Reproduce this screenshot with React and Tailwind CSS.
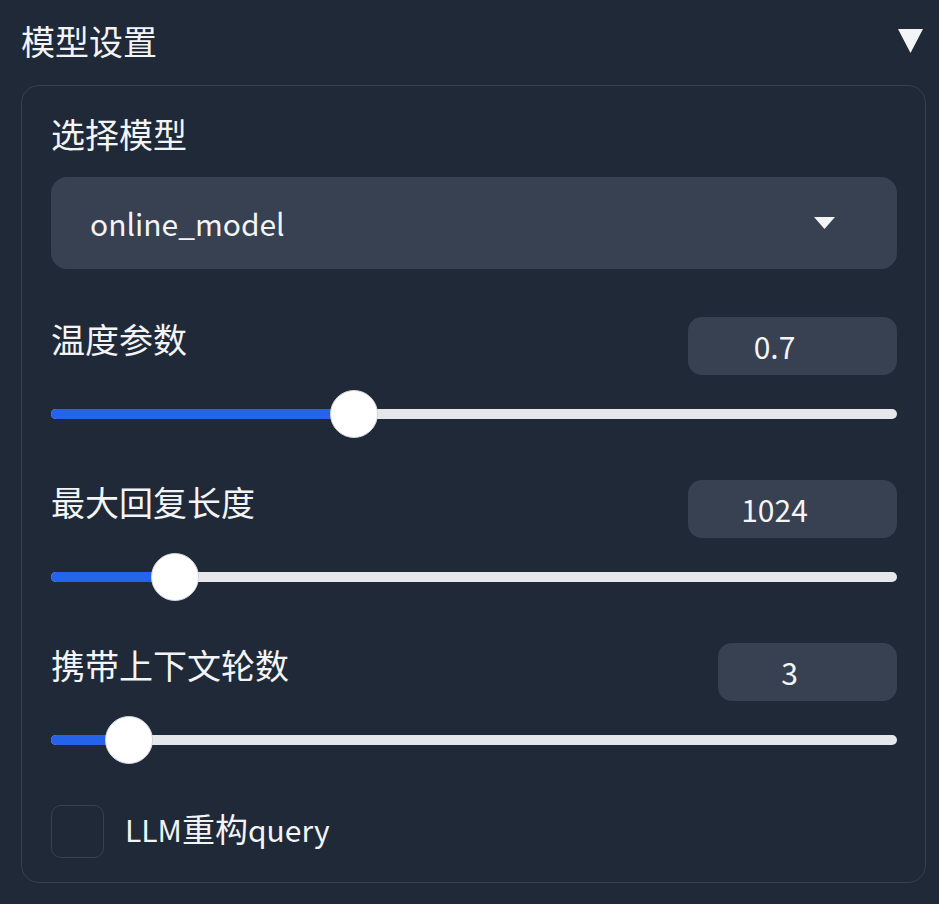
import React from "react";

const font = { fontFamily: '"Noto Sans CJK SC", "Noto Sans", sans-serif' };

function Slider({ center }) {
  return (
    <div className="relative mt-[15px] h-[48px] w-full">
      <div className="absolute left-0 right-0 top-[19px] h-[10px] rounded-full bg-[#e5e7eb]" />
      <div
        className="absolute left-0 top-[19px] h-[10px] rounded-full bg-[#2563eb]"
        style={{ width: center }}
      />
      <div
        className="absolute top-0 h-[48px] w-[48px] rounded-full border border-[#d1d5db] bg-white"
        style={{ left: center - 24 }}
      />
    </div>
  );
}

function SliderRow({ label, value, boxW, center, first }) {
  return (
    <div className={first ? "mt-[48px]" : "mt-[42px]"}>
      <div className="flex items-start justify-between">
        <div className="mt-[2px] h-[40px] text-[34px] leading-[40px] text-[#f3f4f6]">{label}</div>
        <div
          className="flex h-[58px] items-center justify-center rounded-[14px] bg-[#374151] pr-[36px] text-[30px] text-[#f3f4f6]"
          style={{ width: boxW }}
        >
          {value}
        </div>
      </div>
      <Slider center={center} />
    </div>
  );
}

export default function App() {
  return (
    <div className="h-[904px] w-[939px] bg-[#1f2937]" style={font}>
      <div className="flex h-[85px] items-center justify-between pb-[3px] pl-[21px] pr-[16px]">
        <div className="text-[34px] leading-[40px] text-[#f3f4f6]">模型设置</div>
        <svg width="25" height="24" viewBox="0 0 25 24">
          <polygon points="0,0 25,0 12.5,24" fill="#f3f4f6" />
        </svg>
      </div>
      <div className="ml-[21px] mr-[13px] rounded-[18px] border border-[#374151] pb-[24px] pl-[29px] pr-[28px] pt-[28px]">
        <div className="h-[40px] text-[34px] leading-[40px] text-[#f3f4f6]">选择模型</div>
        <div className="mt-[23px] flex h-[92px] items-center justify-between rounded-[16px] bg-[#374151] pl-[39px] pr-[62px]">
          <span className="text-[30px] text-[#f3f4f6]">online_model</span>
          <svg width="21" height="12" viewBox="0 0 21 12">
            <polygon points="0,0 21,0 10.5,12" fill="#f3f4f6" />
          </svg>
        </div>
        <SliderRow first label="温度参数" value="0.7" boxW={209} center={303} />
        <SliderRow label="最大回复长度" value="1024" boxW={209} center={124} />
        <SliderRow label="携带上下文轮数" value="3" boxW={179} center={78} />
        <div className="mt-[41px] flex items-center">
          <div className="h-[53px] w-[53px] rounded-[10px] border border-[#374151]" />
          <div className="ml-[21px] leading-[40px] text-[#f3f4f6]">
            <span className="text-[30px]">LLM</span>
            <span className="text-[33px]">重构</span>
            <span className="text-[30px]">query</span>
          </div>
        </div>
      </div>
    </div>
  );
}
